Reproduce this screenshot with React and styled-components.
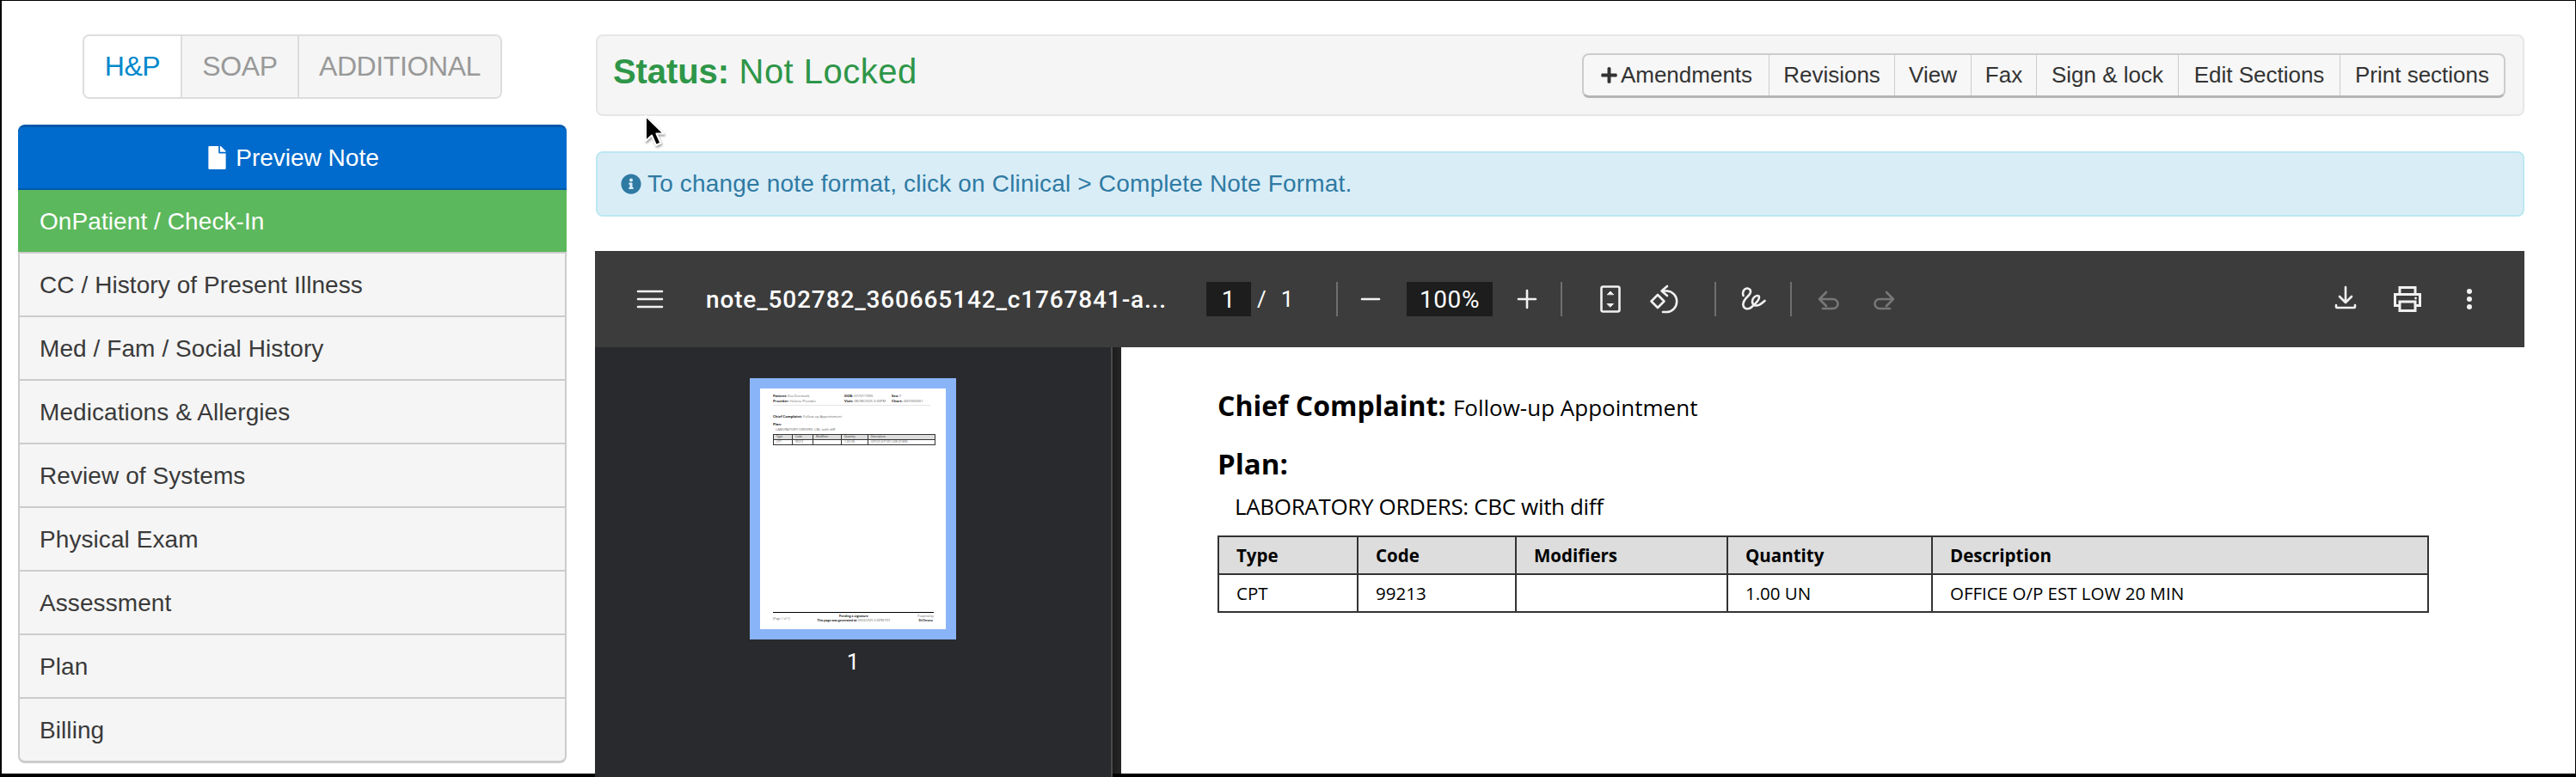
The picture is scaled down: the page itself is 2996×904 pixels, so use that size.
import React from 'react';
import styled, { createGlobalStyle } from 'styled-components';
import { FaFile, FaInfoCircle, FaPlus } from 'react-icons/fa';

const GlobalStyle = createGlobalStyle`
  html, body {
    margin: 0;
    padding: 0;
    background: #fff;
  }
  * {
    box-sizing: border-box;
  }
`;

const Frame = styled.div`
  position: relative;
  display: flex;
  width: 2996px;
  height: 904px;
  background: #fff;
  border-style: solid;
  border-color: #000;
  border-width: 1px 1px 4px 2px;
  font-family: 'Liberation Sans', Arial, sans-serif;
  color: #333;
`;

const Side = styled.aside`
  width: 690px;
  flex: none;
  padding: 39px 33px 0 19px;
`;

const TabsRow = styled.div`
  display: flex;
  justify-content: center;
  margin-bottom: 30px;
`;

const Tabs = styled.div`
  display: flex;
  height: 75px;
  border: 2px solid #ddd;
  border-radius: 8px;
  overflow: hidden;
`;

const Tab = styled.div`
  display: flex;
  align-items: center;
  justify-content: center;
  width: ${p => p.$w}px;
  font-size: 32px;
  letter-spacing: -0.4px;
  color: ${p => (p.$active ? '#0088cc' : '#999')};
  background: ${p => (p.$active ? '#fff' : '#f5f5f5')};
  & + & {
    border-left: 2px solid #ddd;
  }
`;

const PreviewButton = styled.div`
  display: flex;
  align-items: center;
  justify-content: center;
  gap: 8px;
  height: 76px;
  font-size: 28px;
  color: #fff;
  background: #006bcc;
  border-top: 3px solid #0058ab;
  border-bottom: 2px solid #0058ab;
  border-radius: 8px 8px 0 0;
`;

const CheckIn = styled.div`
  display: flex;
  align-items: center;
  height: 72px;
  padding: 1px 0 0 25px;
  font-size: 28px;
  letter-spacing: 0.08px;
  color: #fff;
  background: #5cb85c;
`;

const NavList = styled.div`
  border: 2px solid #ccc;
  border-top: 0;
  border-bottom-width: 3px;
  border-radius: 0 0 8px 8px;
  background: #f5f5f5;
`;

const NavItem = styled.div`
  display: flex;
  align-items: center;
  height: 74px;
  padding: 1px 0 0 23px;
  font-size: 28px;
  letter-spacing: 0.08px;
  color: #3a3a3a;
  border-top: 2px solid #ccc;
`;

const Main = styled.main`
  flex: 1;
  min-width: 0;
  margin-right: 59px;
  padding-top: 39px;
  display: flex;
  flex-direction: column;
`;

const StatusWell = styled.div`
  display: flex;
  justify-content: space-between;
  align-items: flex-start;
  height: 95px;
  margin-left: 1px;
  padding: 19px 20px 0 18px;
  background: #f5f5f5;
  border: 2px solid #e6e6e6;
  border-radius: 8px;
`;

const StatusText = styled.div`
  font-size: 40px;
  line-height: 44px;
  letter-spacing: 0.5px;
  color: #2e9648;
  b {
    font-weight: 700;
    letter-spacing: -0.1px;
  }
`;

const ButtonGroup = styled.div`
  display: flex;
  height: 52px;
  margin-top: 1px;
  background: #f7f7f7;
  border: 2px solid #ccc;
  border-bottom: 3px solid #b5b5b5;
  border-radius: 8px;
`;

const ToolButton = styled.div`
  display: flex;
  align-items: center;
  justify-content: center;
  gap: 3px;
  width: ${p => p.$w}px;
  font-size: 26px;
  color: #333;
  & + & {
    border-left: 1px solid #ccc;
  }
`;

const InfoAlert = styled.div`
  display: flex;
  align-items: center;
  gap: 7px;
  height: 76px;
  margin: 41px 0 40px 1px;
  padding-left: 27px;
  font-size: 28px;
  letter-spacing: 0.17px;
  color: #2f7aa3;
  background: #d9edf7;
  border: 2px solid #bce8f1;
  border-radius: 8px;
`;

const Viewer = styled.section`
  flex: 1;
  min-height: 0;
  display: flex;
  flex-direction: column;
`;

const PdfToolbar = styled.div`
  display: flex;
  align-items: center;
  flex: none;
  height: 112px;
  padding: 0 44px;
  background: #3c3c3c;
  font-family: Roboto, 'Liberation Sans', sans-serif;
  color: #fff;
`;

const IconSlot = styled.span`
  display: flex;
  flex: none;
  width: 40px;
  height: 40px;
  margin-left: ${p => p.$ml || 0}px;
  svg {
    display: block;
    width: 40px;
    height: 40px;
    fill: none;
    stroke: ${p => (p.$off ? '#777' : '#f1f1f1')};
    stroke-width: 2.6;
    stroke-linecap: round;
    stroke-linejoin: round;
  }
`;

const FileName = styled.div`
  flex: none;
  width: 538px;
  margin-left: 45px;
  font-size: 28px;
  letter-spacing: 0.85px;
  font-weight: 500;
  white-space: nowrap;
`;

const DarkField = styled.div`
  display: flex;
  align-items: center;
  justify-content: center;
  flex: none;
  width: ${p => p.$w}px;
  height: 40px;
  margin-left: ${p => p.$ml}px;
  background: #1d1d1d;
  font-size: 28px;
  letter-spacing: 0.6px;
`;

const PageTotal = styled.div`
  display: flex;
  gap: 17px;
  margin-left: 7px;
  font-size: 26px;
  width: 46px;
`;

const ToolDivider = styled.span`
  flex: none;
  width: 2px;
  height: 40px;
  margin-left: ${p => p.$ml}px;
  background: #6f6f6f;
`;

const ToolSpacer = styled.span`
  flex: 1;
`;

const ViewerBody = styled.div`
  flex: 1;
  min-height: 0;
  display: flex;
`;

const ThumbPane = styled.div`
  flex: none;
  width: 602px;
  margin-bottom: -4px;
  padding-top: 36px;
  display: flex;
  flex-direction: column;
  align-items: center;
  background: #292a2d;
  border-right: 2px solid #4b4b4b;
`;

const ThumbFrame = styled.div`
  width: 240px;
  height: 304px;
  border: 12px solid #8ab4f8;
  background: #fff;
`;

const ThumbPage = styled.div`
  display: flex;
  flex-direction: column;
  height: 280px;
  padding: 6px 14px 8px 15px;
  font-family: 'Open Sans', sans-serif;
  font-size: 4.1px;
  line-height: 6px;
  color: #666;
  b {
    color: #222;
    font-weight: 700;
  }
`;

const ThumbHeader = styled.div`
  display: grid;
  grid-template-columns: 83px 55px 1fr;
  padding-bottom: 1px;
  margin-right: 4px;
  border-bottom: 1px solid #e4e4e4;
`;

const ThumbLine = styled.div`
  margin-top: ${p => p.$mt || 0}px;
  padding-left: ${p => p.$indent || 0}px;
`;

const ThumbTable = styled.div`
  display: grid;
  grid-template-columns: 22px 24px 33px 31px 1fr;
  margin-top: 2px;
  margin-right: -2px;
  border: 1px solid #333;
  border-bottom: 0;
  line-height: 5px;
  font-size: 3.2px;
`;

const ThumbCell = styled.div`
  height: 6px;
  padding-left: 3px;
  white-space: nowrap;
  background: ${p => (p.$head ? '#ddd' : '#fff')};
  color: ${p => (p.$head ? '#333' : '#666')};
  border-bottom: 1px solid #333;
  border-right: ${p => (p.$last ? 0 : '1px solid #333')};
`;

const ThumbFooter = styled.div`
  display: flex;
  justify-content: space-between;
  align-items: center;
  margin-top: auto;
  padding-top: 1px;
  border-top: 1px solid #000;
  font-size: 3.4px;
  line-height: 5px;
  text-align: center;
`;

const PageNumber = styled.div`
  margin-top: 10px;
  font-family: Roboto, sans-serif;
  font-size: 26px;
  line-height: 32px;
  color: #fff;
`;

const Gutter = styled.div`
  flex: none;
  width: 10px;
  background: linear-gradient(90deg, #1c1c1c, #262626);
`;

const PdfPage = styled.div`
  flex: 1;
  min-width: 0;
  padding: 48px 0 0 112px;
  font-family: 'Open Sans', 'Noto Sans', sans-serif;
  color: #000;
`;

const PdfHeading = styled.div`
  font-size: ${p => p.$size}px;
  line-height: 40px;
  font-weight: 700;
  margin-bottom: ${p => p.$mb}px;
  span {
    font-size: 26px;
    font-weight: 400;
  }
`;

const PdfIndent = styled.div`
  padding-left: 20px;
  font-size: 26px;
  letter-spacing: -0.35px;
  line-height: 36px;
  margin-bottom: 16px;
`;

const PdfTable = styled.table`
  width: 1407px;
  table-layout: fixed;
  border-collapse: collapse;
  border: 2px solid #333;
  font-size: 20.5px;
  th, td {
    height: 44px;
    padding: 0 0 0 20px;
    border: 2px solid #333;
    text-align: left;
  }
  th {
    background: #ddd;
    font-weight: 700;
  }
  td {
    font-weight: 400;
  }
`;

const Cursor = styled.svg`
  position: absolute;
  left: 744px;
  top: 131px;
  width: 30px;
  height: 42px;
  filter: drop-shadow(1px 2px 1px rgba(0, 0, 0, 0.35));
`;

const navItems = [
  'CC / History of Present Illness',
  'Med / Fam / Social History',
  'Medications & Allergies',
  'Review of Systems',
  'Physical Exam',
  'Assessment',
  'Plan',
  'Billing',
];

const toolButtons = [
  { label: 'Revisions', width: 146 },
  { label: 'View', width: 89 },
  { label: 'Fax', width: 76 },
  { label: 'Sign & lock', width: 165 },
  { label: 'Edit Sections', width: 188 },
  { label: 'Print sections', width: 191 },
];

const columns = [
  { label: 'Type', width: 162, value: 'CPT' },
  { label: 'Code', width: 184, value: '99213' },
  { label: 'Modifiers', width: 246, value: '' },
  { label: 'Quantity', width: 238, value: '1.00 UN' },
  { label: 'Description', width: 577, value: 'OFFICE O/P EST LOW 20 MIN' },
];

const Icon = ({ children, ml, off }) => (
  <IconSlot $ml={ml} $off={off}>
    <svg viewBox="0 0 40 40">{children}</svg>
  </IconSlot>
);

const Thumbnail = () => (
  <ThumbFrame>
    <ThumbPage>
      <ThumbHeader>
        <div><b>Patient:</b> Eva Denmark</div>
        <div><b>DOB:</b> 07/07/1990</div>
        <div><b>Sex:</b> F</div>
        <div><b>Provider:</b> Helena Provider</div>
        <div><b>Visit:</b> 08/08/2025 5:00PM</div>
        <div><b>Chart:</b> GIEV000001</div>
      </ThumbHeader>
      <ThumbLine $mt={10}><b>Chief Complaint:</b> Follow-up Appointment</ThumbLine>
      <ThumbLine $mt={3}><b>Plan:</b></ThumbLine>
      <ThumbLine $indent={3}>LABORATORY ORDERS: CBC with diff</ThumbLine>
      <ThumbTable>
        {columns.map((c, i) => (
          <ThumbCell key={c.label} $head $last={i === 4}>{c.label}</ThumbCell>
        ))}
        {columns.map((c, i) => (
          <ThumbCell key={c.label} $last={i === 4}>{c.value}</ThumbCell>
        ))}
      </ThumbTable>
      <ThumbFooter>
        <div>[Page 1 of 1]</div>
        <div>
          <b>Pending e-signature</b>
          <br />
          <b>This page was generated at</b> 09/04/2025 2:33PM PDT
        </div>
        <div>
          Powered by
          <br />
          <b>DrChrono</b>
        </div>
      </ThumbFooter>
    </ThumbPage>
  </ThumbFrame>
);

const PdfTools = () => (
  <PdfToolbar>
    <Icon>
      <path d="M6 11H34M6 20H34M6 29H34" />
    </Icon>
    <FileName>note_502782_360665142_c1767841-a...</FileName>
    <DarkField $w={52} $ml={44}>1</DarkField>
    <PageTotal>
      <span>/</span>
      <span>1</span>
    </PageTotal>
    <ToolDivider $ml={46} />
    <Icon ml={18}>
      <path d="M10 20H30" />
    </Icon>
    <DarkField $w={100} $ml={22}>100%</DarkField>
    <Icon ml={20}>
      <path d="M10 20H30M20 10V30" />
    </Icon>
    <ToolDivider $ml={19} />
    <Icon ml={36}>
      <rect x="9.5" y="5.5" width="21" height="29" rx="2" />
      <path d="M16.5 14.5L20 11L23.5 14.5ZM16.5 25.5H23.5L20 29Z" fill="#f1f1f1" strokeWidth="1" />
    </Icon>
    <Icon ml={23}>
      <path d="M12 15L19.5 22.5L12 30L4.5 22.5Z" />
      <path d="M23 5L16.5 10.5L23 16M17 10.5H23A12.3 12.3 0 0 1 23 35H18" />
    </Icon>
    <ToolDivider $ml={38} />
    <Icon ml={22}>
      <path d="M9.5 16C8 11 11 7 14.5 7.5C19 8.5 19 12.5 15.5 16C12 19.5 8.5 23 9.5 27.5C10.5 32 16 32.5 19.5 29C23 26 28 21 28 18C28 15 24 15.5 21.5 18.5C19 22 19.5 27 24 27.5C27 28 30 26 34.5 22" />
    </Icon>
    <ToolDivider $ml={24} />
    <Icon ml={24} off>
      <path d="M16 12L8 20L16 28M8 20H24A5.5 5.5 0 0 1 24 31H12" />
    </Icon>
    <Icon ml={22} off>
      <path d="M24 12L32 20L24 28M32 20H16A5.5 5.5 0 0 0 16 31H28" />
    </Icon>
    <ToolSpacer />
    <Icon>
      <path d="M20 6V24M13 17L20 24L27 17M9 27V29Q9 30 11 30H29Q31 30 31 29V27" />
    </Icon>
    <Icon ml={32}>
      <path d="M11 14V6.5H29V14M11 27.5H5.5V14.5H34.5V27.5H29M11 23H29V33.5H11Z" strokeLinecap="butt" strokeLinejoin="miter" strokeWidth="3" />
      <circle cx="29.5" cy="19" r="1.4" fill="#f1f1f1" stroke="none" />
    </Icon>
    <Icon ml={32}>
      <circle cx="20" cy="11" r="3" fill="#f1f1f1" stroke="none" />
      <circle cx="20" cy="20" r="3" fill="#f1f1f1" stroke="none" />
      <circle cx="20" cy="29" r="3" fill="#f1f1f1" stroke="none" />
    </Icon>
  </PdfToolbar>
);

export default function App() {
  return (
    <Frame>
      <GlobalStyle />
      <Side>
        <TabsRow>
          <Tabs>
            <Tab $w={112} $active>H&amp;P</Tab>
            <Tab $w={136}>SOAP</Tab>
            <Tab $w={236}>ADDITIONAL</Tab>
          </Tabs>
        </TabsRow>
        <PreviewButton>
          <FaFile size={27} />
          Preview Note
        </PreviewButton>
        <CheckIn>OnPatient / Check-In</CheckIn>
        <NavList>
          {navItems.map(item => (
            <NavItem key={item}>{item}</NavItem>
          ))}
        </NavList>
      </Side>
      <Main>
        <StatusWell>
          <StatusText>
            <b>Status:</b> Not Locked
          </StatusText>
          <ButtonGroup>
            <ToolButton $w={215}>
              <FaPlus size={21} />
              Amendments
            </ToolButton>
            {toolButtons.map(b => (
              <ToolButton key={b.label} $w={b.width}>{b.label}</ToolButton>
            ))}
          </ButtonGroup>
        </StatusWell>
        <InfoAlert>
          <FaInfoCircle size={24} />
          To change note format, click on Clinical &gt; Complete Note Format.
        </InfoAlert>
        <Viewer>
          <PdfTools />
          <ViewerBody>
            <ThumbPane>
              <Thumbnail />
              <PageNumber>1</PageNumber>
            </ThumbPane>
            <Gutter />
            <PdfPage>
              <PdfHeading $size={32} $mb={26}>
                Chief Complaint: <span>Follow-up Appointment</span>
              </PdfHeading>
              <PdfHeading $size={33} $mb={11}>Plan:</PdfHeading>
              <PdfIndent>LABORATORY ORDERS: CBC with diff</PdfIndent>
              <PdfTable>
                <colgroup>
                  {columns.map(c => (
                    <col key={c.label} width={c.width} />
                  ))}
                </colgroup>
                <thead>
                  <tr>
                    {columns.map(c => (
                      <th key={c.label}>{c.label}</th>
                    ))}
                  </tr>
                </thead>
                <tbody>
                  <tr>
                    {columns.map(c => (
                      <td key={c.label}>{c.value}</td>
                    ))}
                  </tr>
                </tbody>
              </PdfTable>
            </PdfPage>
          </ViewerBody>
        </Viewer>
      </Main>
      <Cursor viewBox="0 0 30 42">
        <path d="M5 3V32L12 25.5L17 37L22.5 34.5L17.5 23.5H26Z" fill="#000" stroke="#fff" strokeWidth="2" strokeLinejoin="round" />
      </Cursor>
    </Frame>
  );
}
